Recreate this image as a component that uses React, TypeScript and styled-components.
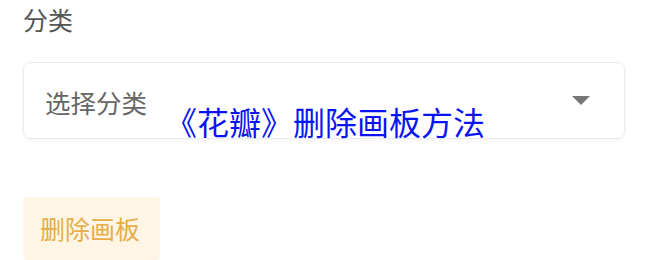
import React from 'react'
import styled, { createGlobalStyle } from 'styled-components'

const GlobalStyle = createGlobalStyle`
  html, body {
    margin: 0;
    padding: 0;
    background: #ffffff;
  }
  body {
    font-family: 'Noto Sans CJK SC', 'Noto Sans', sans-serif;
  }
`

const Page = styled.div`
  position: relative;
  width: 650px;
  height: 260px;
  overflow: hidden;
  padding: 6px 25px 0 23px;
  box-sizing: border-box;
  display: flex;
  flex-direction: column;
`

const FieldLabel = styled.div`
  font-size: 25px;
  line-height: 26px;
  color: #555555;
`

const SelectBox = styled.div`
  margin-top: 30px;
  height: 78px;
  box-sizing: border-box;
  border: 1px solid #ebebeb;
  border-radius: 8px;
  box-shadow: 0 1px 4px rgba(0, 0, 0, 0.05);
  display: flex;
  align-items: center;
  justify-content: space-between;
  padding: 0 34px 0 21px;
`

const Placeholder = styled.span`
  font-size: 25.5px;
  line-height: 26px;
  color: #666666;
  margin-top: 4px;
`

const Caret = styled.span`
  width: 0;
  height: 0;
  border-left: 9px solid transparent;
  border-right: 9px solid transparent;
  border-top: 9px solid #767676;
`

const DeleteButton = styled.button`
  margin-top: 58px;
  align-self: flex-start;
  height: 64px;
  padding: 0 20px 0 17px;
  border: none;
  border-radius: 4px;
  background: #fff5e4;
  color: #e5ae4a;
  font-family: inherit;
  font-size: 25px;
  line-height: 26px;
  cursor: pointer;
`

const Title = styled.div`
  position: absolute;
  left: 0;
  right: 0;
  top: 103px;
  text-align: center;
  font-size: 32px;
  line-height: 36px;
  color: #0a14f0;
`

export default function App() {
  return (
    <>
      <GlobalStyle />
      <Page>
        <FieldLabel>分类</FieldLabel>
        <SelectBox>
          <Placeholder>选择分类</Placeholder>
          <Caret />
        </SelectBox>
        <DeleteButton>删除画板</DeleteButton>
        <Title>《花瓣》删除画板方法</Title>
      </Page>
    </>
  )
}
